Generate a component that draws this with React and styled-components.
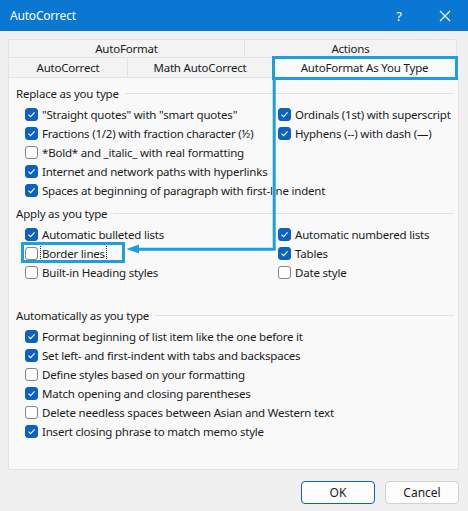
import React from 'react'
import styled, { createGlobalStyle } from 'styled-components'

const GlobalStyle = createGlobalStyle`
  html, body {
    margin: 0;
    padding: 0;
    background: #f0f0f0;
  }
  * {
    box-sizing: border-box;
  }
`

const ACCENT = '#1d9fdb'

const Window = styled.div`
  position: relative;
  width: 468px;
  height: 511px;
  background: #f0f0f0;
  font-family: "Noto Sans", "Open Sans", sans-serif;
  font-size: 11.5px;
  letter-spacing: -0.2px;
  color: #1b1b1b;
  display: flex;
  flex-direction: column;
  overflow: hidden;
`

const TitleBar = styled.div`
  height: 31px;
  flex: none;
  background: #0a77d2;
  color: #fff;
  display: flex;
  align-items: center;
  padding-left: 10px;
`

const Title = styled.div`
  flex: 1;
  font-size: 12px;
`

const TitleButton = styled.div`
  width: 46px;
  height: 31px;
  display: flex;
  align-items: center;
  justify-content: center;
  font-size: 13px;
`

const Body = styled.div`
  flex: 1;
  padding: 8px 0 0 8px;
  display: flex;
  flex-direction: column;
`

const TabRow = styled.div`
  display: flex;
  height: ${p => p.$h}px;
`

const Tab = styled.div`
  width: ${p => p.$w}px;
  display: flex;
  align-items: center;
  justify-content: center;
  background: ${p => (p.$active ? '#fbfbfb' : '#f3f3f3')};
  border: 1px solid #e3e3e3;
  border-right: none;
  border-bottom: none;
  &:last-child {
    border-right: 1px solid #e3e3e3;
  }
`

const Panel = styled.div`
  width: 451px;
  height: 393px;
  background: #f9f9f9;
  border: 1px solid #e3e3e3;
  padding: 7px 0 0 7px;
`

const Group = styled.div`
  margin-bottom: ${p => p.$gap}px;
`

const Heading = styled.div`
  height: 16px;
  display: flex;
  align-items: center;
  margin-bottom: 4px;
  padding-right: 4px;
  &::after {
    content: '';
    flex: 1;
    height: 1px;
    background: #e2e2e2;
    margin-left: 6px;
  }
`

const Grid = styled.div`
  display: grid;
  grid-template-columns: 253px 1fr;
  grid-auto-rows: 19px;
  padding-left: 9px;
`

const Row = styled.label`
  display: flex;
  align-items: center;
  gap: 3px;
  white-space: nowrap;
  grid-column: ${p => p.$col};
`

const Box = styled.span`
  width: 13px;
  height: 13px;
  flex: none;
  border-radius: 3px;
  display: flex;
  align-items: center;
  justify-content: center;
  background: ${p => (p.$on ? '#0c62be' : '#fdfdfd')};
  border: 1px solid ${p => (p.$on ? '#0c62be' : '#858585')};
`

const Label = styled.span`
  padding: 1px 1px;
  outline: ${p => (p.$focus ? '1px dotted #222' : 'none')};
`

const Footer = styled.div`
  height: 40px;
  display: flex;
  justify-content: flex-end;
  align-items: center;
  gap: 10px;
  padding: 2px 9px 0 0;
`

const Button = styled.button`
  width: 74px;
  height: 23px;
  font-family: inherit;
  font-size: 12px;
  color: #1b1b1b;
  background: #fdfdfd;
  border-radius: 4px;
  border: 1px solid ${p => (p.$primary ? '#0c62be' : '#d2d2d2')};
  box-shadow: ${p => (p.$primary ? 'inset 0 0 0 1px #fdfdfd' : 'none')};
`

const HighlightBox = styled.div`
  position: absolute;
  left: ${p => p.$x}px;
  top: ${p => p.$y}px;
  width: ${p => p.$w}px;
  height: ${p => p.$h}px;
  border: 3px solid ${ACCENT};
  pointer-events: none;
`

const Connector = styled.svg`
  position: absolute;
  left: 0;
  top: 0;
  pointer-events: none;
`

const Check = () => (
  <svg width="9" height="9" viewBox="0 0 9 9">
    <path d="M1.5 4.6 L3.6 6.6 L7.6 2.3" fill="none" stroke="#fff" strokeWidth="1.1" />
  </svg>
)

const Option = ({ on, col = 1, focus, children }) => (
  <Row $col={col}>
    <Box $on={on}>{on && <Check />}</Box>
    <Label $focus={focus}>{children}</Label>
  </Row>
)

const Gap = styled.div`
  grid-column: 1;
`

export default function App() {
  return (
    <Window>
      <GlobalStyle />
      <TitleBar>
        <Title>AutoCorrect</Title>
        <TitleButton>?</TitleButton>
        <TitleButton>
          <svg width="12" height="12" viewBox="0 0 12 12">
            <path d="M1 1 L11 11 M11 1 L1 11" stroke="#fff" strokeWidth="1.1" />
          </svg>
        </TitleButton>
      </TitleBar>
      <Body>
        <TabRow $h={18}>
          <Tab $w={236}>AutoFormat</Tab>
          <Tab $w={213}>Actions</Tab>
        </TabRow>
        <TabRow $h={20}>
          <Tab $w={119}>AutoCorrect</Tab>
          <Tab $w={145}>Math AutoCorrect</Tab>
          <Tab $w={185} $active>AutoFormat As You Type</Tab>
        </TabRow>
        <Panel>
          <Group $gap={5}>
            <Heading>Replace as you type</Heading>
            <Grid>
              <Option on>"Straight quotes" with "smart quotes"</Option>
              <Option on col={2}>Ordinals (1st) with superscript</Option>
              <Option on>Fractions (1/2) with fraction character (½)</Option>
              <Option on col={2}>Hyphens (--) with dash (—)</Option>
              <Option>*Bold* and _italic_ with real formatting</Option>
              <Option on>Internet and network paths with hyperlinks</Option>
              <Option on>Spaces at beginning of paragraph with first-line indent</Option>
            </Grid>
          </Group>
          <Group $gap={6}>
            <Heading>Apply as you type</Heading>
            <Grid>
              <Option on>Automatic bulleted lists</Option>
              <Option on col={2}>Automatic numbered lists</Option>
              <Option focus>Border lines</Option>
              <Option on col={2}>Tables</Option>
              <Option>Built-in Heading styles</Option>
              <Option col={2}>Date style</Option>
              <Gap />
            </Grid>
          </Group>
          <Group $gap={0}>
            <Heading>Automatically as you type</Heading>
            <Grid>
              <Option on>Format beginning of list item like the one before it</Option>
              <Option on>Set left- and first-indent with tabs and backspaces</Option>
              <Option>Define styles based on your formatting</Option>
              <Option on>Match opening and closing parentheses</Option>
              <Option>Delete needless spaces between Asian and Western text</Option>
              <Option on>Insert closing phrase to match memo style</Option>
            </Grid>
          </Group>
        </Panel>
      </Body>
      <Footer>
        <Button $primary>OK</Button>
        <Button>Cancel</Button>
      </Footer>

      <HighlightBox $x={272} $y={56} $w={186} $h={24} />
      <HighlightBox $x={21} $y={242} $w={104} $h={21} />
      <Connector width="468" height="511">
        <polyline points="274.2,80 274.2,249.2 136,249.2" fill="none" stroke={ACCENT} strokeWidth="3" />
        <polygon points="126.5,249 139,244.5 139,253.5" fill={ACCENT} />
      </Connector>
    </Window>
  )
}
